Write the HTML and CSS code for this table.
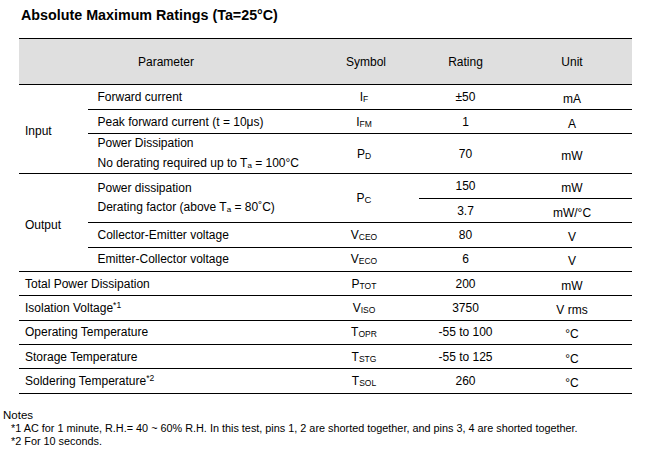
FILE: index.html
```html
<!DOCTYPE html>
<html>
<head>
<meta charset="utf-8">
<link rel="stylesheet" href="styles.css">
</head>
<body>
<h1 class="title">Absolute Maximum Ratings (Ta=25°C)</h1>
<table class="ratings">
  <colgroup>
    <col class="c-group">
    <col class="c-param">
    <col class="c-sym">
    <col class="c-rate">
    <col class="c-unit">
  </colgroup>
  <thead>
    <tr class="r-head">
      <th colspan="2">Parameter</th>
      <th>Symbol</th>
      <th>Rating</th>
      <th>Unit</th>
    </tr>
  </thead>
  <tbody>
    <tr class="r25">
      <td rowspan="3" class="group">Input</td>
      <td class="param">Forward current</td>
      <td class="sym">I<sub>F</sub></td>
      <td class="rate">±50</td>
      <td class="unit">mA</td>
    </tr>
    <tr class="r24">
      <td class="param">Peak forward current (t = 10μs)</td>
      <td class="sym">I<sub>FM</sub></td>
      <td class="rate">1</td>
      <td class="unit">A</td>
    </tr>
    <tr class="r39">
      <td class="param two">Power Dissipation<br>No derating required up to T<sub class="ta">a</sub> = 100°C</td>
      <td class="sym">P<sub>D</sub></td>
      <td class="rate">70</td>
      <td class="unit">mW</td>
    </tr>
    <tr class="r25">
      <td rowspan="4" class="group low">Output</td>
      <td rowspan="2" class="param two">Power dissipation<br>Derating factor (above T<sub class="ta">a</sub> = 80˚C)</td>
      <td rowspan="2" class="sym">P<sub class="big">C</sub></td>
      <td class="rate">150</td>
      <td class="unit">mW</td>
    </tr>
    <tr class="r24">
      <td class="rate">3.7</td>
      <td class="unit">mW/°C</td>
    </tr>
    <tr class="r245">
      <td class="param">Collector-Emitter voltage</td>
      <td class="sym">V<sub>CEO</sub></td>
      <td class="rate">80</td>
      <td class="unit">V</td>
    </tr>
    <tr class="r245">
      <td class="param">Emitter-Collector voltage</td>
      <td class="sym">V<sub>ECO</sub></td>
      <td class="rate">6</td>
      <td class="unit">V</td>
    </tr>
    <tr class="r24">
      <td colspan="2" class="whole">Total Power Dissipation</td>
      <td class="sym">P<sub>TOT</sub></td>
      <td class="rate">200</td>
      <td class="unit">mW</td>
    </tr>
    <tr class="r245">
      <td colspan="2" class="whole">Isolation Voltage<sup>*1</sup></td>
      <td class="sym">V<sub>ISO</sub></td>
      <td class="rate">3750</td>
      <td class="unit">V rms</td>
    </tr>
    <tr class="r245">
      <td colspan="2" class="whole">Operating Temperature</td>
      <td class="sym">T<sub>OPR</sub></td>
      <td class="rate">-55 to 100</td>
      <td class="unit">°C</td>
    </tr>
    <tr class="r24">
      <td colspan="2" class="whole">Storage Temperature</td>
      <td class="sym">T<sub>STG</sub></td>
      <td class="rate">-55 to 125</td>
      <td class="unit">°C</td>
    </tr>
    <tr class="r245">
      <td colspan="2" class="whole">Soldering Temperature<sup>*2</sup></td>
      <td class="sym">T<sub>SOL</sub></td>
      <td class="rate">260</td>
      <td class="unit">°C</td>
    </tr>
  </tbody>
</table>
<div class="notes">
  <div class="notes-title">Notes</div>
  <div class="note">*1 AC for 1 minute, R.H.= 40 ~ 60% R.H. In this test, pins 1, 2 are shorted together, and pins 3, 4 are shorted together.</div>
  <div class="note">*2 For 10 seconds.</div>
</div>
</body>
</html>
```

FILE: styles.css
```css
html, body {
  margin: 0;
  padding: 0;
  background: #ffffff;
}

body {
  font-family: "Liberation Sans", Arial, sans-serif;
  color: #000000;
}

.title {
  margin: 7px 0 0 21px;
  font-size: 14.3px;
  line-height: 17px;
  font-weight: bold;
}

.ratings {
  margin: 14px 0 0 19px;
  width: 613px;
  table-layout: fixed;
  border-collapse: collapse;
  font-size: 12px;
}

.c-group { width: 69px; }
.c-param { width: 225px; }
.c-sym { width: 106px; }
.c-rate { width: 93px; }
.c-unit { width: 120px; }

.ratings th,
.ratings td {
  padding: 0;
  border-top: 1px solid #000;
  border-bottom: 1px solid #000;
  vertical-align: middle;
  line-height: 14px;
}

.ratings th {
  background: #dfdfdf;
  font-weight: normal;
  text-align: center;
}

.r-head { height: 46px; }
.r25 { height: 25px; }
.r24 { height: 24px; }
.r245 { height: 24.5px; }
.r39 { height: 39px; }

.group {
  text-align: left;
  padding-left: 6px !important;
  padding-top: 4px !important;
}

.param {
  text-align: left;
  padding-left: 9.5px !important;
}

.two {
  line-height: 19.5px !important;
}

.whole {
  text-align: left;
  padding-left: 6px !important;
}

.sym, .rate {
  text-align: center;
}

.sym {
  padding-right: 4px !important;
}

.unit {
  text-align: center;
  padding-top: 4px !important;
}

sub {
  font-size: 8.5px;
  vertical-align: -1px;
  line-height: 0;
}

sub.big {
  font-size: 9.5px;
}

sub.ta {
  font-size: 8px;
  vertical-align: -1px;
}

sup {
  font-size: 8.5px;
  vertical-align: 4px;
  line-height: 0;
}

.notes {
  margin: 14px 0 0 3px;
}

.notes-title {
  font-size: 11.5px;
  line-height: 14px;
}

.note {
  padding-left: 8px;
  font-size: 10.85px;
  line-height: 13.5px;
}
```
